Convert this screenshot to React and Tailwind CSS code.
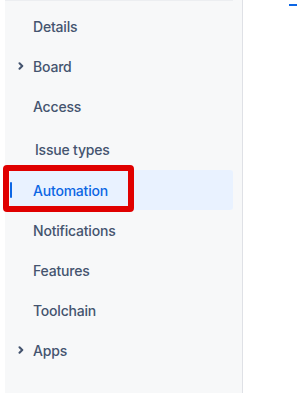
import React from 'react';

const items = [
  { label: 'Details' },
  { label: 'Board', chevron: true },
  { label: 'Access' },
  { label: 'Issue types', tall: true },
  { label: 'Automation', active: true },
  { label: 'Notifications' },
  { label: 'Features' },
  { label: 'Toolchain' },
  { label: 'Apps', chevron: true },
];

const Chevron = () => (
  <svg width="8" height="8" viewBox="0 0 8 8" className="absolute left-[7px] top-1/2 -translate-y-1/2">
    <path d="M2.5 1.2 L5.3 4 L2.5 6.8" fill="none" stroke="#44546f" strokeWidth="2" strokeLinecap="round" strokeLinejoin="round" />
  </svg>
);

export default function App() {
  return (
    <div className="w-[297px] h-[394px] bg-white flex overflow-hidden" style={{ fontFamily: 'Inter, "Liberation Sans", sans-serif' }}>
      <div className="w-[5px] shrink-0" />
      {/* sidebar */}
      <div className="w-[238px] h-[393px] shrink-0 bg-[#f7f8f9] border-r border-[#dfe1e6] flex flex-col">
        <div className="h-px mr-[9px] bg-[#eceef1]" />
        <div className="pt-[5px] flex flex-col">
          {items.map((it) => (
            <div
              key={it.label}
              className={`relative ml-[5px] mr-[9px] flex items-center rounded-[3px] text-[14px] font-medium tracking-[-0.2px] ${
                it.tall ? 'h-[44px] pl-[25px] pt-[2px]' : 'h-[40px] pl-[23px]'
              } ${it.active ? 'bg-[#e9f2ff] text-[#0c66e4]' : 'text-[#44546f]'}`}
            >
              {it.chevron && <Chevron />}
              {it.active && (
                <div className="absolute left-0 top-[12px] w-[2px] h-[16px] rounded-[1px] bg-[#0c66e4]" />
              )}
              {it.label}
              {it.active && (
                <div className="absolute left-[-7px] top-[-5px] w-[131px] h-[47px] border-[6px] border-[#e00000] rounded-[4px]" />
              )}
            </div>
          ))}
        </div>
      </div>
      {/* main */}
      <div className="flex-1 relative">
        <div className="absolute right-0 top-[4px] w-[8px] h-[2px] bg-[#0c66e4]" />
      </div>
    </div>
  );
}
